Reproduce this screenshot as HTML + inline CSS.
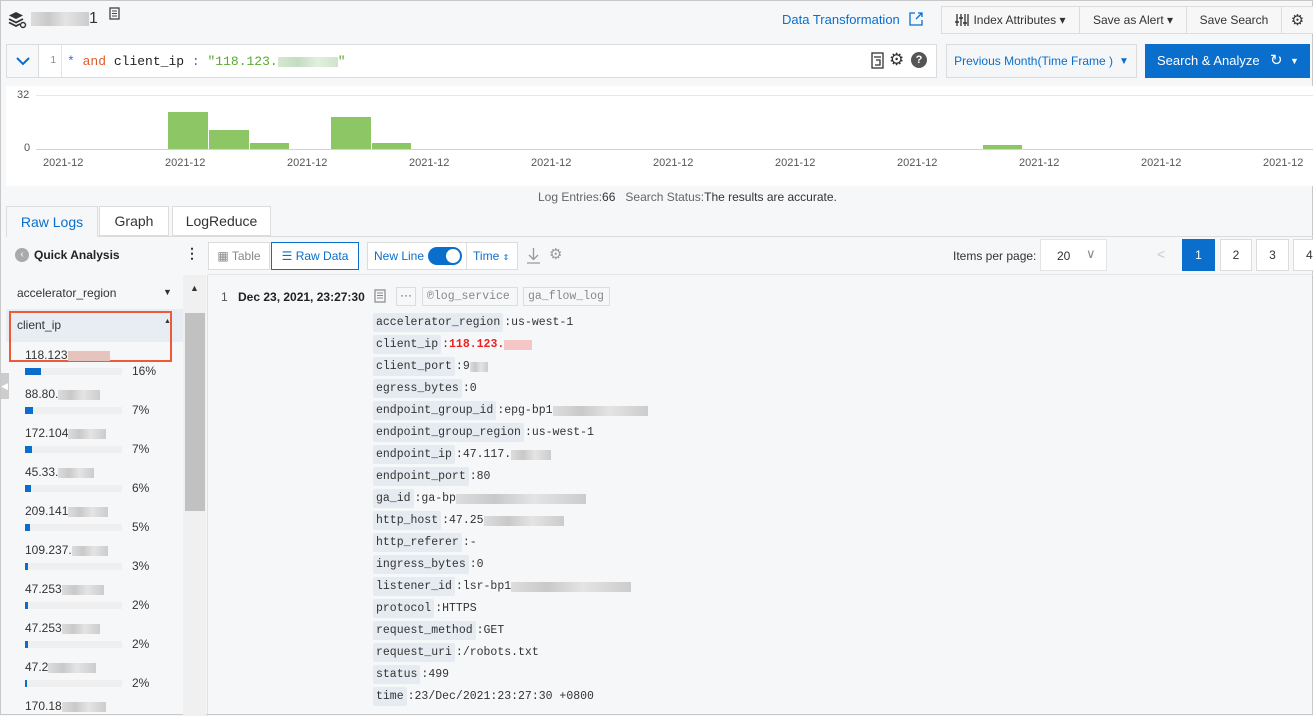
<!DOCTYPE html>
<html><head><meta charset="utf-8"><style>
*{box-sizing:border-box;margin:0;padding:0}
body{width:1313px;height:715px;overflow:hidden;background:#f6f7f9;font-family:"Liberation Sans",sans-serif;font-size:12px;color:#333;position:relative;border:1px solid #c8c8c8}
.a{position:absolute}
.btn{position:absolute;background:#f7f7f7;border:1px solid #dcdcdc;font-size:12px;color:#333;display:flex;align-items:center;justify-content:center}
.mono{font-family:"Liberation Mono",monospace}
.blur{display:inline-block;height:10px;background:linear-gradient(90deg,#ddd,#c9c9c9 30%,#e4e4e4 60%,#ccc);vertical-align:middle}
.xl{position:absolute;top:156px;font-size:11px;color:#555}
.bar{position:absolute;background:#8cc665}
.row{position:absolute;left:372px;display:flex;align-items:center;height:19px;font-family:"Liberation Mono",monospace;font-size:11.5px;color:#333;white-space:nowrap}
.row b{font-weight:normal;background:#e6ebf1;border-radius:2px;padding:0 3px;line-height:19px;margin-right:1px}
.it{position:absolute;left:24px;font-size:12px;color:#333}
.pb{position:absolute;left:24px;width:97px;height:7px;background:#efefef}
.pb i{display:block;height:7px;background:#0a6fcc}
.pc{position:absolute;left:131px;font-size:12px;color:#333}
</style></head><body>
<svg class="a" style="left:7px;top:10px" width="20" height="18" viewBox="0 0 20 18"><path d="M8 1L15 4.5 8 8 1 4.5Z" fill="#333"/><path d="M1 8l7 3.5 7-3.5M1 11.5l7 3.5 4-2" stroke="#333" stroke-width="1.8" fill="none"/><circle cx="15" cy="14" r="2.5" stroke="#333" stroke-width="1.4" fill="none"/></svg>
<div class="a" style="left:30px;top:9px;font-size:16px;color:#333"><span class="blur" style="width:58px;height:14px"></span>1</div>
<svg class="a" style="left:108px;top:6px" width="12" height="14" viewBox="0 0 12 14"><rect x="1" y="1" width="9" height="11" fill="none" stroke="#444" stroke-width="1.3"/><path d="M3 4h5M3 6.5h5M3 9h5" stroke="#444"/></svg>
<div class="a" style="left:781px;top:11px;font-size:13px;color:#0a6fcc">Data Transformation</div>
<svg class="a" style="left:908px;top:11px" width="14" height="14" viewBox="0 0 14 14"><path d="M6 1H1v12h12V8" fill="none" stroke="#0a6fcc" stroke-width="1.3"/><path d="M7 7l6-6M9 1h4v4" fill="none" stroke="#0a6fcc" stroke-width="1.3"/></svg>
<div class="btn" style="left:940px;top:5px;width:139px;height:28px">
<svg width="14" height="14" viewBox="0 0 14 14" style="margin-right:4px"><path d="M2 1v12M6 1v12M10 1v12M13 1v12" stroke="#333" stroke-width="1.3"/><path d="M0 9h4M4 5h4M8 10h4" stroke="#333" stroke-width="1.6"/></svg>Index Attributes ▾</div>
<div class="btn" style="left:1078px;top:5px;width:108px;height:28px">Save as Alert ▾</div>
<div class="btn" style="left:1185px;top:5px;width:96px;height:28px">Save Search</div>
<div class="btn" style="left:1280px;top:5px;width:33px;height:28px;font-size:15px">⚙</div>
<div class="a" style="left:5px;top:43px;width:931px;height:34px;background:#fff;border:1px solid #dcdcdc"></div>
<div class="a" style="left:5px;top:43px;width:33px;height:34px;border:1px solid #dcdcdc;background:#f7f8fa"></div>
<svg class="a" style="left:15px;top:55px" width="14" height="10" viewBox="0 0 14 10"><path d="M1 2l6 6 6-6" stroke="#0a6fcc" stroke-width="2" fill="none"/></svg>
<div class="a" style="left:38px;top:44px;width:23px;height:32px;border-right:1px solid #e4e4e4;font-size:10px;color:#888;text-align:right;padding:10px 5px 0 0">1</div>
<div class="a mono" style="left:66px;top:53px;font-size:13px"><span style="color:#3b6fd6">*</span> <span style="color:#e0592a">and</span> <span style="color:#222">client_ip</span> <span style="color:#3b6fd6">:</span> <span style="color:#5aaa31">"118.123.</span><span class="blur" style="width:60px;background:linear-gradient(90deg,#d5e8cf,#c4ddc2,#e4efe0,#cfe4c9)"></span><span style="color:#5aaa31">"</span></div>
<svg class="a" style="left:870px;top:51px" width="13" height="17" viewBox="0 0 13 17"><rect x="1" y="1" width="11" height="15" fill="none" stroke="#333" stroke-width="1.3"/><path d="M3 5h7M5 8h4v5H4" stroke="#333" stroke-width="1.3" fill="none"/></svg>
<div class="a" style="left:888px;top:49px;font-size:17px;color:#333">⚙</div>
<div class="a" style="left:910px;top:51px;width:16px;height:16px;border-radius:50%;background:#555;color:#fff;font-size:11px;font-weight:bold;text-align:center;line-height:16px">?</div>
<div class="btn" style="left:945px;top:43px;width:191px;height:34px;color:#0a6fcc;background:#f5f6f8">Previous Month(Time Frame ) <span style="margin-left:6px;font-size:10px">▼</span></div>
<div class="a" style="left:1144px;top:43px;width:165px;height:34px;background:#0a6fcc;color:#fff;font-size:13px;line-height:34px;padding-left:12px">Search &amp; Analyze<span style="position:absolute;left:125px;font-size:15px">↻</span><span style="position:absolute;left:145px;font-size:9px">▼</span></div>
<div class="a" style="left:5px;top:85px;width:1308px;height:100px;background:#fff"></div>
<div class="a" style="left:16px;top:88px;font-size:11px;color:#555">32</div>
<div class="a" style="left:23px;top:141px;font-size:11px;color:#555">0</div>
<div class="a" style="left:35px;top:94px;width:1278px;height:1px;background:#e8e8e8"></div>
<div class="a" style="left:35px;top:148px;width:1278px;height:1px;background:#c9d4e6"></div>
<div class="bar" style="left:167px;top:111px;width:40px;height:37px"></div>
<div class="bar" style="left:208px;top:129px;width:40px;height:19px"></div>
<div class="bar" style="left:249px;top:142px;width:39px;height:6px"></div>
<div class="bar" style="left:330px;top:116px;width:40px;height:32px"></div>
<div class="bar" style="left:371px;top:142px;width:39px;height:6px"></div>
<div class="bar" style="left:982px;top:144px;width:39px;height:4px"></div>
<div class="xl" style="left:42px">2021-12</div><div class="xl" style="left:164px">2021-12</div><div class="xl" style="left:286px">2021-12</div><div class="xl" style="left:408px">2021-12</div><div class="xl" style="left:530px">2021-12</div><div class="xl" style="left:652px">2021-12</div><div class="xl" style="left:774px">2021-12</div><div class="xl" style="left:896px">2021-12</div><div class="xl" style="left:1018px">2021-12</div><div class="xl" style="left:1140px">2021-12</div><div class="xl" style="left:1262px">2021-12</div>
<div class="a" style="left:537px;top:189px;font-size:12px;color:#666">Log Entries:<span style="color:#333">66</span>&nbsp;&nbsp; Search Status:<span style="color:#333">The results are accurate.</span></div>
<div class="a" style="left:5px;top:205px;width:92px;height:31px;border:1px solid #dcdcdc;border-bottom:none;background:#f6f7f9;color:#0a6fcc;font-size:14px;text-align:center;line-height:30px">Raw Logs</div>
<div class="a" style="left:98px;top:205px;width:70px;height:30px;border:1px solid #dcdcdc;background:#fff;font-size:14px;text-align:center;line-height:29px">Graph</div>
<div class="a" style="left:171px;top:205px;width:99px;height:30px;border:1px solid #dcdcdc;background:#fff;font-size:14px;text-align:center;line-height:29px">LogReduce</div>
<div class="a" style="left:97px;top:235px;width:1216px;height:1px;background:#dcdcdc"></div>
<div class="a" style="left:14px;top:247px;width:14px;height:14px;border-radius:50%;background:#aaa;color:#fff;font-size:10px;line-height:14px;text-align:center">‹</div>
<div class="a" style="left:33px;top:247px;font-size:12px;font-weight:bold;color:#222">Quick Analysis</div>
<div class="a" style="left:184px;top:244px;font-size:14px;font-weight:bold">⋮</div>
<div class="a" style="left:182px;top:274px;width:23px;height:441px;background:#f0f0f0"></div>
<div class="a" style="left:184px;top:312px;width:20px;height:198px;background:#c1c1c1"></div>
<div class="a" style="left:189px;top:282px;font-size:9px;color:#333">▲</div>
<div class="a" style="left:206px;top:274px;width:1px;height:441px;background:#dde3da"></div>
<div class="a" style="left:16px;top:285px;font-size:12px">accelerator_region</div>
<div class="a" style="left:162px;top:286px;font-size:9px">▼</div>
<div class="a" style="left:5px;top:308px;width:177px;height:33px;background:#e8edf3"></div>
<div class="a" style="left:16px;top:317px;font-size:12px">client_ip</div>
<div class="a" style="left:163px;top:317px;font-size:7px">▲</div>
<div class="a" style="left:8px;top:310px;width:163px;height:51px;border:2px solid #ee5a35"></div>
<div class="a" style="left:0;top:372px;width:8px;height:26px;background:#ccc;color:#fff;font-size:9px;line-height:26px">◀</div>
<div class="it" style="top:347px">118.123<span class="blur" style="width:42px;background:#e6c3bc"></span></div>
<div class="pb" style="top:367px"><i style="width:16px"></i></div><div class="pc" style="top:363px">16%</div>
<div class="it" style="top:386px">88.80.<span class="blur" style="width:42px"></span></div>
<div class="pb" style="top:406px"><i style="width:8px"></i></div><div class="pc" style="top:402px">7%</div>
<div class="it" style="top:425px">172.104<span class="blur" style="width:38px"></span></div>
<div class="pb" style="top:445px"><i style="width:7px"></i></div><div class="pc" style="top:441px">7%</div>
<div class="it" style="top:464px">45.33.<span class="blur" style="width:36px"></span></div>
<div class="pb" style="top:484px"><i style="width:6px"></i></div><div class="pc" style="top:480px">6%</div>
<div class="it" style="top:503px">209.141<span class="blur" style="width:40px"></span></div>
<div class="pb" style="top:523px"><i style="width:5px"></i></div><div class="pc" style="top:519px">5%</div>
<div class="it" style="top:542px">109.237.<span class="blur" style="width:36px"></span></div>
<div class="pb" style="top:562px"><i style="width:3px"></i></div><div class="pc" style="top:558px">3%</div>
<div class="it" style="top:581px">47.253<span class="blur" style="width:42px"></span></div>
<div class="pb" style="top:601px"><i style="width:3px"></i></div><div class="pc" style="top:597px">2%</div>
<div class="it" style="top:620px">47.253<span class="blur" style="width:38px"></span></div>
<div class="pb" style="top:640px"><i style="width:3px"></i></div><div class="pc" style="top:636px">2%</div>
<div class="it" style="top:659px">47.2<span class="blur" style="width:48px"></span></div>
<div class="pb" style="top:679px"><i style="width:2px"></i></div><div class="pc" style="top:675px">2%</div>
<div class="it" style="top:698px">170.18<span class="blur" style="width:44px"></span></div>
<div class="btn" style="left:207px;top:241px;width:62px;height:28px;color:#888;background:#fff">▦ Table</div>
<div class="btn" style="left:270px;top:241px;width:88px;height:28px;color:#0a6fcc;background:#fff;border-color:#0a6fcc">☰&nbsp;Raw Data</div>
<div class="btn" style="left:366px;top:241px;width:151px;height:28px;background:#fff;justify-content:flex-start;padding-left:6px;color:#0a6fcc">New Line<span style="display:inline-block;width:34px;height:18px;border-radius:9px;background:#0a6fcc;margin-left:4px;position:relative"><i style="position:absolute;right:2px;top:2px;width:14px;height:14px;border-radius:50%;background:#fff"></i></span><span style="border-left:1px solid #ddd;height:26px;margin-left:4px;padding-left:6px;line-height:26px">Time <span style="font-size:8px">⇕</span></span></div>
<svg class="a" style="left:525px;top:246px" width="15" height="17" viewBox="0 0 15 17"><path d="M7.5 1v11M3 8l4.5 4.5L12 8M1 16h13" stroke="#999" stroke-width="1.3" fill="none"/></svg>
<div class="a" style="left:548px;top:244px;font-size:15px;color:#999">⚙</div>
<div class="a" style="left:952px;top:248px;font-size:12px;color:#333">Items per page:</div>
<div class="a" style="left:1039px;top:238px;width:67px;height:32px;background:#fff;border:1px solid #e4e4e4;padding:9px 0 0 16px">20<span style="position:absolute;left:45px;top:6px;color:#888;font-size:13px">∨</span></div>
<div class="a" style="left:1156px;top:245px;color:#ccc;font-size:14px">&lt;</div>
<div class="a" style="left:1181px;top:238px;width:33px;height:32px;background:#0a6fcc;color:#fff;text-align:center;line-height:32px">1</div>
<div class="a" style="left:1219px;top:238px;width:32px;height:32px;background:#fff;border:1px solid #dcdcdc;text-align:center;line-height:30px">2</div>
<div class="a" style="left:1255px;top:238px;width:33px;height:32px;background:#fff;border:1px solid #dcdcdc;text-align:center;line-height:30px">3</div>
<div class="a" style="left:1292px;top:238px;width:30px;height:32px;background:#fff;border:1px solid #dcdcdc;padding:8px 0 0 12px">4</div>
<div class="a" style="left:207px;top:273px;width:1106px;height:1px;background:#e4e4e4"></div>
<div class="a" style="left:220px;top:289px;font-size:12px;color:#555">1</div>
<div class="a" style="left:237px;top:289px;font-size:12px;font-weight:bold;color:#222">Dec 23, 2021, 23:27:30</div>
<svg class="a" style="left:373px;top:288px" width="13" height="15" viewBox="0 0 13 15"><rect x="1" y="1" width="10" height="12" fill="none" stroke="#888" stroke-width="1.2"/><path d="M3 4h6M3 6.5h6M3 9h6" stroke="#888"/></svg>
<div class="a" style="left:395px;top:286px;width:20px;height:19px;border:1px solid #ddd;text-align:center;line-height:14px;color:#555">···</div>
<div class="a mono" style="left:421px;top:286px;width:96px;height:19px;border:1px solid #ddd;color:#888;line-height:17px;padding-left:4px;font-size:11.5px">℗log_service</div>
<div class="a mono" style="left:522px;top:286px;width:87px;height:19px;border:1px solid #ddd;color:#888;line-height:17px;padding-left:4px;font-size:11.5px">ga_flow_log</div>

<div class="row" style="top:312px"><b>accelerator_region</b>:us-west-1</div>
<div class="row" style="top:334px"><b>client_ip</b>:<span style="color:#e22;font-weight:bold">118.123.</span><span class="blur" style="width:28px;background:#f4c6c6"></span></div>
<div class="row" style="top:356px"><b>client_port</b>:9<span class="blur" style="width:18px"></span></div>
<div class="row" style="top:378px"><b>egress_bytes</b>:0</div>
<div class="row" style="top:400px"><b>endpoint_group_id</b>:epg-bp1<span class="blur" style="width:95px"></span></div>
<div class="row" style="top:422px"><b>endpoint_group_region</b>:us-west-1</div>
<div class="row" style="top:444px"><b>endpoint_ip</b>:47.117.<span class="blur" style="width:40px"></span></div>
<div class="row" style="top:466px"><b>endpoint_port</b>:80</div>
<div class="row" style="top:488px"><b>ga_id</b>:ga-bp<span class="blur" style="width:130px"></span></div>
<div class="row" style="top:510px"><b>http_host</b>:47.25<span class="blur" style="width:80px"></span></div>
<div class="row" style="top:532px"><b>http_referer</b>:-</div>
<div class="row" style="top:554px"><b>ingress_bytes</b>:0</div>
<div class="row" style="top:576px"><b>listener_id</b>:lsr-bp1<span class="blur" style="width:120px"></span></div>
<div class="row" style="top:598px"><b>protocol</b>:HTTPS</div>
<div class="row" style="top:620px"><b>request_method</b>:GET</div>
<div class="row" style="top:642px"><b>request_uri</b>:/robots.txt</div>
<div class="row" style="top:664px"><b>status</b>:499</div>
<div class="row" style="top:686px"><b>time</b>:23/Dec/2021:23:27:30 +0800</div>
</body></html>
